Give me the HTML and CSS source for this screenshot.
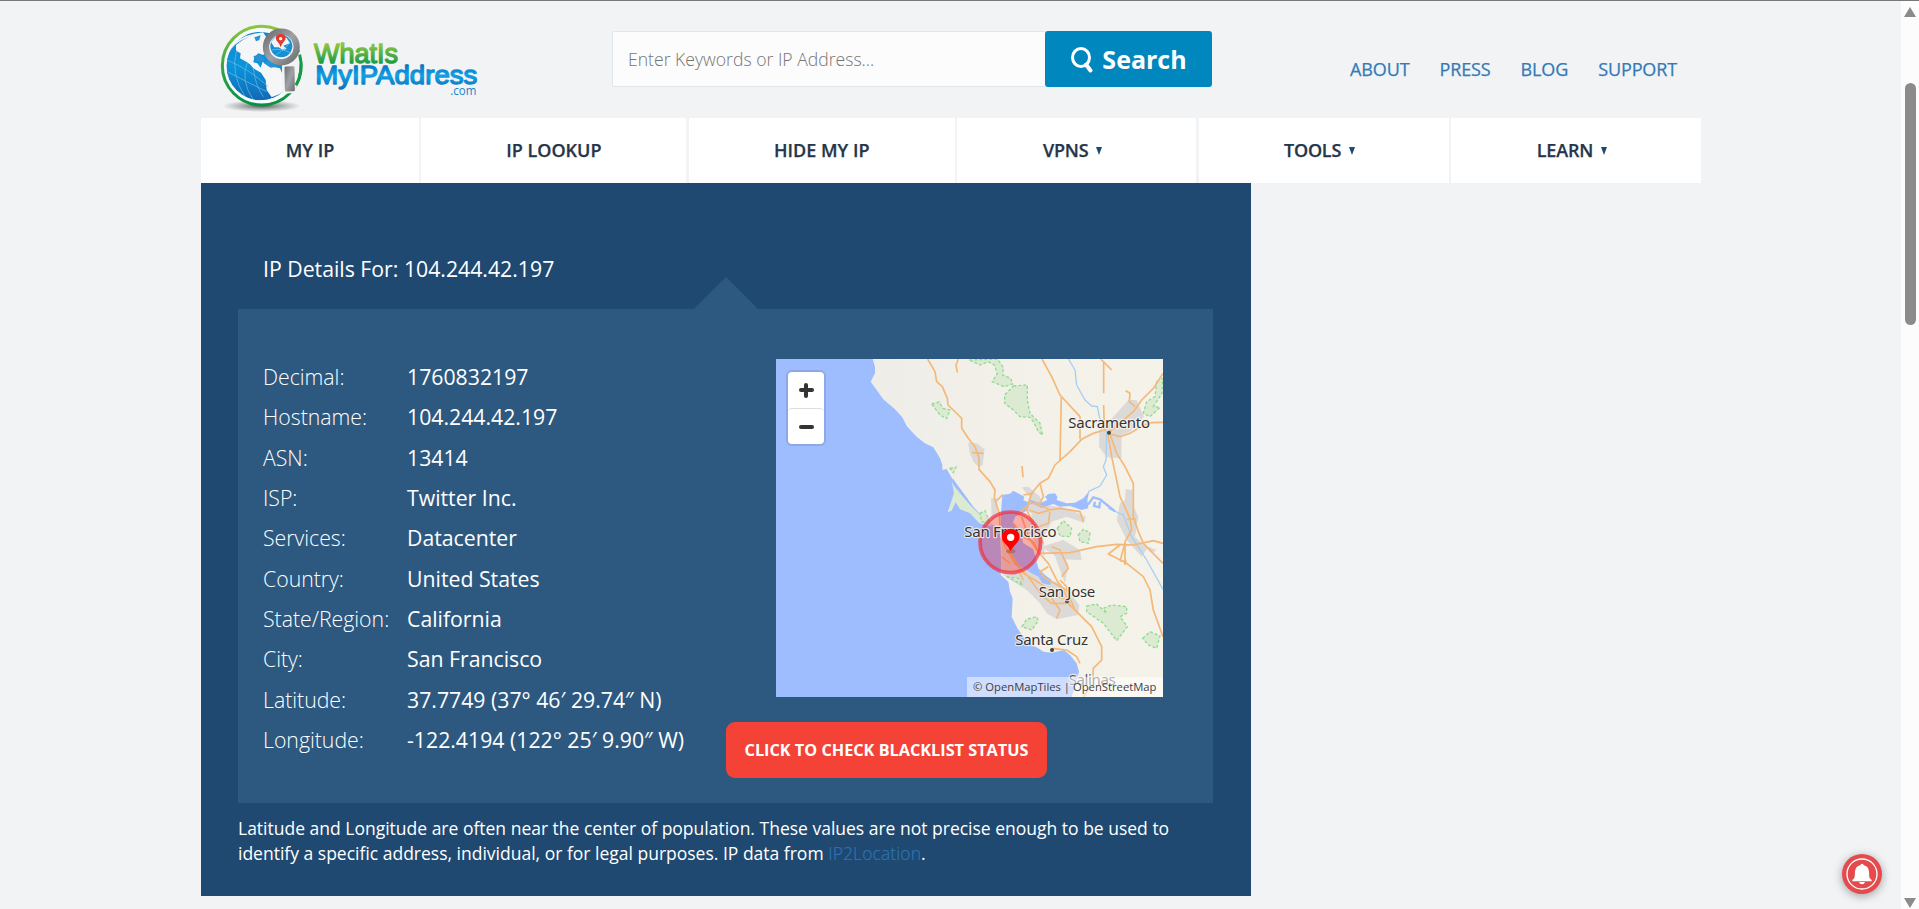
FILE: index.html
```html
<!DOCTYPE html>
<html lang="en">
<head>
<meta charset="utf-8">
<title>IP Details For: 104.244.42.197</title>
<link rel="stylesheet" href="styles.css">
</head>
<body>
<div class="site">
  <header class="header">
    <a class="logo">
      <svg width="280" height="96" viewBox="0 0 840 288">
        <defs>
          <linearGradient id="ring" x1="0" y1="0" x2="0" y2="1"><stop offset="0" stop-color="#8cc540"/><stop offset=".5" stop-color="#38a344"/><stop offset="1" stop-color="#009444"/></linearGradient>
          <linearGradient id="sea" x1="0" y1="0" x2="0" y2="1"><stop offset="0" stop-color="#1a86cf"/><stop offset=".5" stop-color="#0a95dc"/><stop offset="1" stop-color="#1269b5"/></linearGradient>
          <linearGradient id="metal" x1="0" y1="0" x2="1" y2="1"><stop offset="0" stop-color="#6d6e71"/><stop offset=".5" stop-color="#a0a2a5"/><stop offset="1" stop-color="#6d6e71"/></linearGradient>
          <linearGradient id="green" x1="0" y1="0" x2="0" y2="1"><stop offset=".2" stop-color="#8dc63f"/><stop offset=".85" stop-color="#159947"/></linearGradient>
          <linearGradient id="blue" x1="0" y1="0" x2="0" y2="1"><stop offset=".1" stop-color="#0a6cb8"/><stop offset=".5" stop-color="#12a0e4"/><stop offset="1" stop-color="#0a6cb8"/></linearGradient>
          <radialGradient id="shade"><stop offset="0" stop-color="#000" stop-opacity=".6"/><stop offset=".55" stop-color="#000" stop-opacity=".25"/><stop offset="1" stop-color="#000" stop-opacity="0"/></radialGradient>
          <clipPath id="globe"><circle cx="182" cy="198" r="103"/></clipPath>
        </defs>
        <g transform="translate(-3 -60)">
          <ellipse cx="185" cy="318" rx="118" ry="18" fill="url(#shade)"/>
          <circle cx="185" cy="197" r="118" fill="#f8f9fa" stroke="url(#ring)" stroke-width="9"/>
          <g clip-path="url(#globe)">
            <circle cx="182" cy="198" r="103" fill="url(#sea)"/>
            <path fill="#f4f6f7" d="M108 135 128 120 150 109 190 98 212 130 190 165 175 160 163 172 160 187 172 190 182 203 188 185 205 198 240 205 255 240 245 280 215 292 200 270 197 240 183 218 160 205 150 193 140 186 120 175 122 160 108 152Z"/>
            <path fill="#2a92d4" d="M163 112 182 106 178 120 168 124ZM160 168 182 164 194 178 182 187 166 181ZM190 188 208 184 232 200 212 203Z"/>
            <path fill="none" stroke="#6fc0ea" stroke-width="2" d="M80 180Q145 205 205 260M82 215Q140 245 200 275M110 150Q90 220 135 290M142 187Q120 240 160 300M160 205Q165 255 190 290"/>
            <path fill="none" stroke="#f4f6f7" stroke-width="5" d="M92 145Q120 107 190 99"/>
          </g>
          <path fill="#f1f3f5" d="M278 165 312 150 308 166 296 200 290 262 280 279 246 281 246 196Z"/>
          <path fill="none" stroke="#159a45" stroke-width="9" d="M299 164Q312 214 288 256"/>
          <circle cx="244" cy="141" r="46" fill="#f4f6f7" stroke="url(#metal)" stroke-width="19"/>
          <circle cx="244" cy="139" r="33" fill="#158fd5"/>
          <path fill="#eef5f9" d="M213 126 226 112 244 108 260 114 270 130 250 137 260 147 249 150 236 142 223 142Z"/>
          <path fill="none" stroke="#79c4ec" stroke-width="2" d="M216 150Q246 143 273 160M228 165Q255 148 270 128"/>
          <path fill="#e6382c" d="M242 142Q238 130 229 121Q223 103 242 101Q260 103 256 119Q246 130 242 142Z"/>
          <circle cx="242" cy="116" r="5" fill="#fff"/>
          <rect x="254" y="199" width="30" height="75" rx="4" fill="url(#metal)" transform="rotate(-1 269 236)"/>
          <g class="wordmark">
            <text x="342" y="189" font-size="82" textLength="252" lengthAdjust="spacingAndGlyphs" fill="url(#green)" stroke="url(#green)">WhatIs</text>
            <text x="346" y="253" font-size="78" textLength="486" lengthAdjust="spacingAndGlyphs" fill="url(#blue)" stroke="url(#blue)">MyIPAddress</text>
          </g>
          <text class="dotcom" x="751" y="284" font-size="39" textLength="78" lengthAdjust="spacingAndGlyphs">.com</text>
        </g>
      </svg>
    </a>
    <form class="search">
      <input class="search-input" type="text" placeholder="Enter Keywords or IP Address...">
      <button class="search-button" type="button">
        <svg width="22" height="27" viewBox="0 0 22 27"><ellipse cx="10" cy="11.500" rx="8.500" ry="9" fill="none" stroke="#fff" stroke-width="3"/><path d="M15 18.500 19.500 24.500" stroke="#fff" stroke-width="4" stroke-linecap="round"/></svg>
        <span>Search</span>
      </button>
    </form>
    <nav class="links"><a>ABOUT</a><a>PRESS</a><a>BLOG</a><a>SUPPORT</a></nav>
  </header>
  <nav class="menu">
    <a>MY IP</a><a>IP LOOKUP</a><a>HIDE MY IP</a><a class="drop">VPNS <i class="caret"></i></a><a class="drop">TOOLS <i class="caret"></i></a><a class="drop">LEARN <i class="caret"></i></a>
  </nav>
  <main class="panel">
    <h1 class="title">IP Details For: 104.244.42.197</h1>
    <section class="details">
      <dl class="facts">
        <dt>Decimal:</dt><dd>1760832197</dd>
        <dt>Hostname:</dt><dd>104.244.42.197</dd>
        <dt>ASN:</dt><dd>13414</dd>
        <dt>ISP:</dt><dd>Twitter Inc.</dd>
        <dt>Services:</dt><dd>Datacenter</dd>
        <dt>Country:</dt><dd>United States</dd>
        <dt>State/Region:</dt><dd>California</dd>
        <dt>City:</dt><dd>San Francisco</dd>
        <dt>Latitude:</dt><dd>37.7749 (37° 46′ 29.74″ N)</dd>
        <dt>Longitude:</dt><dd>-122.4194 (122° 25′ 9.90″ W)</dd>
      </dl>
      <div class="side">
        <div class="map">
          <svg class="map-art" width="387" height="338" viewBox="-552 27 1161 1014">
            <defs><linearGradient id="land" x1="0" x2="1"><stop offset="0" stop-color="#eeede8"/><stop offset=".6" stop-color="#f4f1e9"/><stop offset="1" stop-color="#f5f2ea"/></linearGradient></defs>
            <rect x="-552" y="27" width="1161" height="1014" fill="#9ebdff"/>
            <path fill="url(#land)" d="M-262 27-255 50-255 70-268 95-250 120-230 148-195 178-172 203-160 228-140 250-130 260-105 280-80 292-60 325-53 345-53 360-40 357-22 388 0 415 40 470 80 515 112 532 120 545 124 640 122 675 145 695 150 725 158 745 155 800 172 835 190 860 215 885 235 895 250 905 275 908 312 900 330 915 350 940 357 965 347 1000 335 1041 609 1041 609 27Z"/>
            <path fill="#dcead1" d="M-25 393-18 430-37 487-25 482-13 457 0 478 30 490 58 520 100 530 80 515 30 465 0 430-20 405Z"/>
            <path fill="none" stroke="#9ebdff" stroke-width="5" d="M-22 388 0 423 22 450"/>
            <g fill="#dcdad9">
              <path d="M25 277 50 280 74 298 68 345 56 352 40 335 28 305ZM505 150 530 150 552 200 510 245 485 255 484 325 440 322 417 290 418 240 460 200ZM497 417 518 420 518 465 535 500 525 560 575 610 590 600 565 590 545 620 500 570 470 510 480 460 495 450ZM185 412 205 410 240 440 250 465 300 470 350 488 378 500 372 518 320 500 275 515 250 565 255 620 235 595 210 545 215 490 195 480 208 440ZM93 445 112 445 112 500 95 505ZM125 560 150 580 190 640 240 680 300 700 330 730 358 765 355 795 290 808 260 790 240 760 200 720 160 695 124 670ZM245 590 310 570 360 600 365 630 300 628Z"/>
              <path d="M275 590 300 590 325 645 315 700 300 660Z"/>
            </g>
            <g class="parks">
              <path d="M28 30 112 27 130 52 128 75 152 85 158 102 132 110 97 95 112 70 103 45 85 35 60 45Z"/>
              <path d="M160 108 202 105 202 150 210 190 240 220 248 255 235 245 220 215 210 202 180 200 160 180 134 160 134 135Z"/>
              <path d="M590 95 608 85 606 130 580 170 600 172 570 200 550 190 560 155 585 140Z"/>
              <path d="M380 768 410 762 440 790 430 775 455 765 500 770 500 790 480 800 502 830 470 872 430 820 380 785Z"/>
              <path d="M548 865 570 845 600 858 590 895 565 885Z"/>
              <path d="M186 830 200 808 230 800 235 812 215 840Z"/>
              <path d="M292 535 310 512 335 535 330 560 300 558ZM355 555 370 538 390 548 385 580 360 575Z"/>
              <path d="M-85 162-62 156-52 175-30 180-40 206-60 195Z"/>
              <path d="M60 490 75 482 90 520 65 515ZM140 680 175 685 188 705 170 695Z"/>
              <path d="M-30 355-12 352-20 368Z"/>
            </g>
            <g fill="none" stroke="#a9cff0" stroke-width="4">
              <path d="M325 27 345 60 350 105 375 150 395 168 412 170 418 200 440 250 438 330 430 350 440 375 420 408 385 425"/>
              <path d="M445 475 490 495 515 560 560 630 609 718"/>
            </g>
            <g fill="#9ebdff">
              <path d="M127 435 150 431 160 422 180 433 193 440 190 450 208 458 205 475 195 485 165 500 158 520 180 540 190 580 220 598 235 655 255 675 275 690 270 705 248 700 235 680 215 670 190 655 165 645 150 615 160 590 140 565 124 548 122 500Z"/>
              <path d="M205 447 240 460 262 450 255 440 265 432 285 430 292 440 290 450 320 460 345 458 370 445 388 423 382 450 385 475 365 480 330 468 300 470 280 462 245 474 215 460Z"/>
            </g>
            <path fill="none" stroke="#9ebdff" stroke-width="7" d="M345 462 385 462 400 442 420 448 465 484M405 455 402 468 418 472 420 455"/>
            <g class="roads">
              <path d="M-97 27-75 65-70 95-53 110-38 145-36 165-5 195 5 205 5 235 25 265 45 290 57 325 57 358 90 395 105 420 103 445 118 490 120 530"/>
              <path d="M-5 27-12 45-8 68M110 452 128 434M36 308 70 310M186 348 189 382"/>
              <path d="M246 27 275 80 300 135 360 200 360 268M304 140 300 330M431 35 431 130M422 27 455 60M431 165 433 240 400 250 365 268 330 305 285 345 265 385 240 400 215 430 200 480 220 520 250 580"/>
              <path d="M609 70 580 115 545 150 520 185 450 245M497 122 510 130 508 155 525 170M609 217 575 218 550 225 510 250 480 260 450 252"/>
              <path d="M443 248 455 320 472 400 480 440 510 505 515 540 495 575 495 645M450 252 470 310 495 350 520 400 520 500 535 545 550 580 609 640M500 507 528 507"/>
              <path d="M190 435 220 430M240 400 250 440 240 460 210 460 170 495M208 480 235 490 270 480 300 475 360 485 370 515M270 485 265 520 235 530M222 460 250 470 270 480"/>
              <path d="M185 500 205 560 230 600 265 640 290 690 310 720 325 750M160 520 190 560 220 575 240 610 330 608 410 590 470 583 520 585 580 572 609 580M275 590 300 600 325 655 305 680M480 585 445 612 500 640 550 680 570 720 580 780 609 860M480 633 500 633M495 580 480 633"/>
              <path d="M125 560 135 590 165 640 205 680 245 735 275 760 325 760 355 790 395 830 425 890 425 930 400 955 398 1000 370 1041M145 600 190 670 240 700 290 740 330 750M270 735 285 760 300 780 290 805M300 690 320 710 330 770M265 650 240 665 255 685 320 720 345 780"/>
              <path d="M275 895 320 900 350 920 360 940M175 660 190 690M125 620 150 640"/>
            </g>
            <circle cx="151" cy="577" r="91" fill="#ff0000" fill-opacity=".28" stroke="#f12e40" stroke-opacity=".7" stroke-width="11"/>
            <g fill="#454545"><circle cx="447" cy="248" r="6"/><circle cx="321" cy="754" r="6"/><circle cx="276" cy="900" r="6"/></g>
            <g class="places">
              <text x="325" y="233" textLength="245">Sacramento</text>
              <text x="13" y="560" textLength="277">San Francisco</text>
              <text x="236" y="740" textLength="170">San Jose</text>
              <text x="166" y="885" textLength="218">Santa Cruz</text>
              <text x="326" y="1005" textLength="141" fill-opacity=".8">Salinas</text>
            </g>
            <ellipse cx="152" cy="604" rx="14" ry="6" fill="#9a5b3b" opacity=".55"/>
            <path fill="#f00" d="M152 604Q145 590 131 576Q122 564 128 550Q135 537 152 536Q169 537 176 550Q182 564 173 576Q159 590 152 604Z"/>
            <circle cx="152" cy="562" r="11" fill="#fff"/>
          </svg>
          <div class="zoom"><span class="plus"></span><span class="minus"></span></div>
          <div class="credit">© OpenMapTiles | OpenStreetMap</div>
        </div>
        <a class="check">CLICK TO CHECK BLACKLIST STATUS</a>
      </div>
    </section>
    <p class="note">Latitude and Longitude are often near the center of population. These values are not precise enough to be used to<br>identify a specific address, individual, or for legal purposes. IP data from <a>IP2Location</a>.</p>
  </main>
</div>
<div class="bell">
  <svg width="40" height="40" viewBox="0 0 120 120"><circle cx="60" cy="60" r="45" fill="none" stroke="#fff" stroke-width="4"/><path fill="#fff" d="M55 34Q56 29 60 29Q64 29 65 34Q80 37 81 53L82 69Q84 75 89 78V82H31V78Q36 75 38 69L39 53Q40 37 55 34ZM51 84H69Q67 91 60 91Q53 91 51 84Z"/></svg>
</div>
<div class="scrollbar"><i class="up"></i><i class="thumb"></i><i class="down"></i></div>
</body>
</html>
```

FILE: styles.css
```css
* { box-sizing: border-box; }
html, body { margin: 0; height: 909px; overflow: hidden; }
body {
  background: #f1f3f5;
  font-family: "Open Sans", "Noto Sans", sans-serif;
  color: #263548;
  border-top: 1px solid #79767c;
}
.site { width: 1500px; margin-left: 201px; }

.header { display: flex; height: 117px; align-items: flex-start; }
.logo { display: block; width: 411px; padding: 19px 0 0 0; }
.logo svg { display: block; }
.wordmark { font-family: "Liberation Sans", sans-serif; stroke-width: 4; stroke-linejoin: round; }
.dotcom { fill: #1784cb; }

.search { display: flex; width: 600px; height: 56px; margin-top: 30px; }
.search-input {
  width: 433px;
  padding: 0 0 0 15px;
  border: 1px solid #e2e5e8;
  border-right: 0;
  border-radius: 2px 0 0 2px;
  background: #fcfcfc;
  font: 300 17.6px "Open Sans", sans-serif;
}
.search-input::placeholder { color: #757575; opacity: 1; }
.search-button {
  display: flex;
  align-items: center;
  justify-content: center;
  gap: 9px;
  width: 167px;
  padding: 0 0 0 1px;
  border: 0;
  border-radius: 3px;
  background: #0087be;
  color: #fff;
  font: 700 25px/1 "Open Sans", sans-serif;
}

.links { display: flex; gap: 30px; margin: 55px 0 0 138px; font-size: 18px; line-height: 26px; font-weight: 500; letter-spacing: -.12px; color: #337ab7; -webkit-text-stroke: .25px #337ab7; }

.menu { display: grid; grid-template-columns: 218px 265px 266px 239px 250px 250px; justify-content: space-between; height: 65px; }
.menu a { display: flex; align-items: center; justify-content: center; gap: 8px; padding-bottom: 2px; background: #fff; font-size: 18px; font-weight: 600; -webkit-text-stroke: .25px #263548; }
.menu .drop { padding-right: 8px; letter-spacing: -.2px; }
.caret { border: 3.5px solid transparent; border-top: 8px solid #1f4971; border-bottom: 0; margin-top: 2px; }

.panel { width: 1050px; height: 713px; padding: 67px 38px 0 37px; background: #1f4971; color: #fff; }
.title { margin: 0 0 0 25px; height: 59px; line-height: 38px; font-size: 21.25px; font-weight: 400; }
.details { position: relative; display: flex; height: 494px; padding: 48px 0 0 25px; background: #2d5980; }
.details::before { content: ""; position: absolute; left: 456px; top: -32px; border: 32px solid transparent; border-top: 0; border-bottom-color: #2d5980; }
.facts { display: grid; grid-template-columns: 144px 319px; grid-auto-rows: 40.35px; margin: 0; height: 404px; font-size: 21.25px; line-height: 39px; white-space: nowrap; }
.facts dt { font-weight: 300; }
.facts dd { margin: 0; font-weight: 400; }
.side { padding-top: 2px; }
.map { position: relative; width: 387px; height: 338px; margin-left: 50px; overflow: hidden; }
.map-art { display: block; }
.parks { fill: #dcead1; stroke: #8fdc92; stroke-width: 4; stroke-dasharray: 9 6; }
.roads { fill: none; stroke: #f4b878; stroke-width: 5; stroke-linejoin: round; }
.places { font: 45px "Noto Sans", sans-serif; fill: #333; stroke: #f7f5ef; stroke-width: 7; stroke-opacity: .8; paint-order: stroke; stroke-linejoin: round; }
.zoom { position: absolute; left: 12px; top: 13px; width: 36px; height: 72px; border-radius: 4px; background: #fff; box-shadow: 0 0 0 2px rgba(0, 0, 0, .1); }
.zoom span { display: flex; align-items: center; justify-content: center; position: relative; height: 36px; }
.zoom span + span { border-top: 1px solid #ddd; border-radius: 4px; }
.zoom span::before { content: ""; width: 15px; height: 4px; border-radius: 2px; background: #333; }
.zoom .plus::after { content: ""; position: absolute; width: 4px; height: 15px; border-radius: 2px; background: #333; }
.credit { position: absolute; right: 0; bottom: 0; width: 196px; height: 20px; padding-left: 6px; background: rgba(255, 255, 255, .5); color: #404040; font-size: 11.25px; line-height: 20px; white-space: nowrap; }
.check { display: flex; align-items: center; justify-content: center; width: 321px; height: 56px; margin-top: 25px; border-radius: 9px; background: #f44336; font-size: 16.25px; font-weight: 700; white-space: nowrap; }
.note { margin: 13px 0 0; font-size: 17.5px; line-height: 25px; white-space: nowrap; }
.note a { color: #2f74b3; font-weight: 300; letter-spacing: .1px; -webkit-text-stroke: .2px #2f74b3; }

.bell { position: fixed; left: 1842px; top: 854px; width: 40px; height: 40px; border-radius: 50%; background: #e54b4d; box-shadow: 0 2px 10px rgba(0, 0, 0, .35); }
.bell svg { display: block; }
.scrollbar { position: fixed; right: 0; top: 1px; width: 18px; height: 908px; background: #fcfcfc; display: flex; flex-direction: column; align-items: center; }
.up { margin-top: 6px; border: 6.5px solid transparent; border-top: 0; border-bottom: 10px solid #8b8b8b; }
.thumb { width: 11px; height: 242px; margin-top: 66px; border-radius: 6px; background: #8b8b8b; }
.down { margin-top: auto; margin-bottom: 1px; border: 6.5px solid transparent; border-bottom: 0; border-top: 10px solid #8b8b8b; }
```
